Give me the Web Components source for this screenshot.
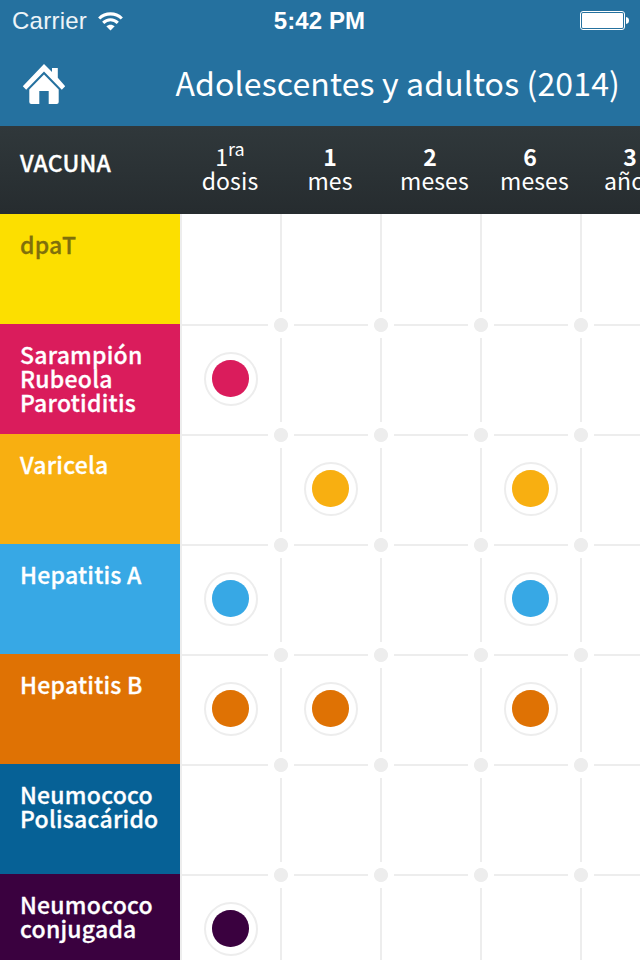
<!DOCTYPE html>
<html lang="es">
<head>
<meta charset="UTF-8">
<title>Adolescentes y adultos (2014)</title>
<style>
    html, body { margin: 0; height: 960px; overflow: hidden; background: #fff; }
</style>
</head>
<body>
<vaccine-app></vaccine-app>

<script>
    // --- DATA ---
    const columns = [
        { top: '1', sup: 'ra', bottom: 'dosis' },
        { top: '1', bottom: 'mes', strong: true },
        { top: '2', bottom: 'meses', strong: true },
        { top: '6', bottom: 'meses', strong: true },
        { top: '3', bottom: 'años', strong: true }
    ];

    const vaccines = [
        { name: ['dpaT'], color: '#fcdf00', text: '#7f6f0b', doses: [] },
        { name: ['Sarampión', 'Rubeola', 'Parotiditis'], color: '#da1c5c', doses: [0] },
        { name: ['Varicela'], color: '#f8af11', doses: [1, 3] },
        { name: ['Hepatitis A'], color: '#37a8e5', doses: [0, 3] },
        { name: ['Hepatitis B'], color: '#df7204', doses: [0, 1, 3] },
        { name: ['Neumococo', 'Polisacárido'], color: '#066196', doses: [] },
        { name: ['Neumococo', 'conjugada'], color: '#3a013f', doses: [0] }
    ];

    // --- WEB COMPONENTS ---
    class StatusBar extends HTMLElement {
        connectedCallback() {
            this.attachShadow({ mode: 'open' }).innerHTML = `
                <style>
                    :host { display: grid; grid-template-columns: 1fr auto 1fr; align-items: center; height: 40px; padding: 0 11px 0 12px; box-sizing: border-box; font: 24px/38px "Liberation Sans", Arial, sans-serif; color: #fff; }
                    .carrier { display: flex; align-items: center; gap: 11px; letter-spacing: 0.25px; color: #edf4f8; }
                    .carrier, .time { padding-top: 2px; }
                    .time { font-weight: 700; letter-spacing: 0.1px; margin-right: 2px; }
                    .battery { justify-self: end; }
                    svg { display: block; }
                </style>
                <div class="carrier"><span>Carrier</span>
                    <svg width="25" height="19" viewBox="0 0 25 19">
                        <g fill="none" stroke="#fff" stroke-width="3.100">
                            <path d="M1.200 6.500C7.500.300 17.500.300 23.800 6.500"/>
                            <path d="M5.200 10.800C9.300 6.700 15.700 6.700 19.800 10.800"/>
                        </g>
                        <path fill="#fff" d="M12.500 18.500 8.300 14.300C10.700 12.100 14.300 12.100 16.700 14.300Z"/>
                    </svg>
                </div>
                <div class="time">5:42 PM</div>
                <svg class="battery" width="49" height="19" viewBox="0 0 49 19">
                    <rect x=".5" y=".5" width="44" height="18" rx="2.500" fill="none" stroke="#fff"/>
                    <rect x="2" y="2" width="41" height="15" rx="1" fill="#fff"/>
                    <path fill="#fff" d="M46 6c2 .3 3 1.500 3 3.500s-1 3.200-3 3.500Z"/>
                </svg>
            `;
        }
    }

    class NavBar extends HTMLElement {
        connectedCallback() {
            this.attachShadow({ mode: 'open' }).innerHTML = `
                <style>
                    :host { display: flex; align-items: center; justify-content: space-between; height: 86px; padding: 0 20px 0 22px; box-sizing: border-box; color: #fff; font-size: 32px; line-height: 84px; letter-spacing: 0.13px; }
                    .title { white-space: nowrap; padding-bottom: 2px; }
                    svg { display: block; }
                </style>
                <svg width="44" height="42" viewBox="0 0 44 42" fill="#fff">
                    <path d="M22 2 30 9.900V6H35.800V15.800L43.200 24.300 39.800 27.800 22 9.600 4.200 27.800.8 24.300Z"/>
                    <path d="M22 12.500 36.700 27.500V40Q36.700 42 34.700 42H26.700V29H17.300V42H9.300Q7.300 42 7.300 40V27.500Z"/>
                </svg>
                <div class="title"><slot></slot></div>
            `;
        }
    }

    class ColumnHead extends HTMLElement {
        connectedCallback() {
            this.attachShadow({ mode: 'open' }).innerHTML = `
                <style>
                    :host { display: block; flex: 0 0 100px; min-width: 0; box-sizing: border-box; padding: 18px 20px 0; text-align: center; white-space: nowrap; font-size: 23px; line-height: 24px; letter-spacing: 0.1px; }
                    div { height: 24px; }
                    ::slotted(sup) { font-size: 18px; line-height: 0; vertical-align: 10px; }
                    ::slotted(b) { font-weight: 700; }
                </style>
                <div><slot name="top"></slot><slot name="sup"></slot></div>
                <div><slot></slot></div>
            `;
        }
    }

    class DoseCell extends HTMLElement {
        connectedCallback() {
            this.attachShadow({ mode: 'open' }).innerHTML = `
                <style>
                    :host { display: block; position: relative; flex: 0 0 100px; height: 110px; box-sizing: border-box; border-left: 2px solid #ededed; border-top: 2px solid #ededed; }
                    :host([first-row]) { border-top: 0; padding-top: 2px; }
                    /* joint drawn over the crossing of the grid lines */
                    .joint { position: absolute; left: -14px; top: -14px; width: 26px; height: 26px; background: radial-gradient(circle, #ededed 6.600px, #fff 7.400px); }
                    :host([first-row]) .joint, :host([first-column]) .joint { display: none; }
                    .dose { width: 50px; height: 50px; margin: 26px 0 0 22px; border: 2px solid #ededed; border-radius: 50%; display: grid; }
                    .dose::after { content: ""; width: 36.500px; height: 36.500px; margin: 6px; border-radius: 50%; background: var(--dose-color); }
                </style>
                <div class="joint"></div>
                ${this.hasAttribute('dose') ? '<div class="dose"></div>' : ''}
            `;
        }
    }

    class VaccineRow extends HTMLElement {
        connectedCallback() {
            this.attachShadow({ mode: 'open' }).innerHTML = `
                <style>
                    :host { display: flex; height: 110px; }
                    .name { flex: 0 0 180px; box-sizing: border-box; padding: 18px 0 0 20px; background: var(--dose-color); color: var(--name-color, #fff); font-size: 23px; font-weight: 500; line-height: 24px; letter-spacing: 0.23px; -webkit-text-stroke: 0.3px; white-space: nowrap; }
                </style>
                <div class="name"><slot name="name"></slot></div>
                <slot></slot>
            `;
        }
    }

    class VaccineApp extends HTMLElement {
        connectedCallback() {
            const heads = columns.map(c => `
                <column-head>${c.strong ? `<b slot="top">${c.top}</b>` : `<span slot="top">${c.top}</span>`}${c.sup ? `<sup slot="sup">${c.sup}</sup>` : ''}<span>${c.bottom}</span></column-head>
            `).join('');

            const rows = vaccines.map((v, row) => `
                <vaccine-row style="--dose-color: ${v.color}; ${v.text ? `--name-color: ${v.text}` : ''}">
                    <span slot="name">${v.name.join('<br>')}</span>
                    ${columns.map((c, col) => `<dose-cell ${row === 0 ? 'first-row' : ''} ${col === 0 ? 'first-column' : ''} ${v.doses.includes(col) ? 'dose' : ''}></dose-cell>`).join('')}
                </vaccine-row>
            `).join('');

            this.attachShadow({ mode: 'open' }).innerHTML = `
                <style>
                    :host { display: block; width: 640px; height: 960px; overflow: hidden; background: #fff; font-family: "Noto Sans CJK SC", "Noto Sans", sans-serif; }
                    header { background: #25719f; }
                    .head { display: flex; height: 88px; color: #fff; background: linear-gradient(#30383b, #262c2f); }
                    .vacuna { flex: 0 0 180px; box-sizing: border-box; padding: 24px 0 0 20px; font-size: 23px; font-weight: 500; line-height: 24px; letter-spacing: 0.2px; -webkit-text-stroke: 0.3px; }
                </style>
                <header>
                    <status-bar></status-bar>
                    <nav-bar>Adolescentes y adultos (2014)</nav-bar>
                </header>
                <div class="head"><div class="vacuna">VACUNA</div>${heads}</div>
                <main>${rows}</main>
            `;
        }
    }

    customElements.define('status-bar', StatusBar);
    customElements.define('nav-bar', NavBar);
    customElements.define('column-head', ColumnHead);
    customElements.define('dose-cell', DoseCell);
    customElements.define('vaccine-row', VaccineRow);
    customElements.define('vaccine-app', VaccineApp);
</script>
</body>
</html>
